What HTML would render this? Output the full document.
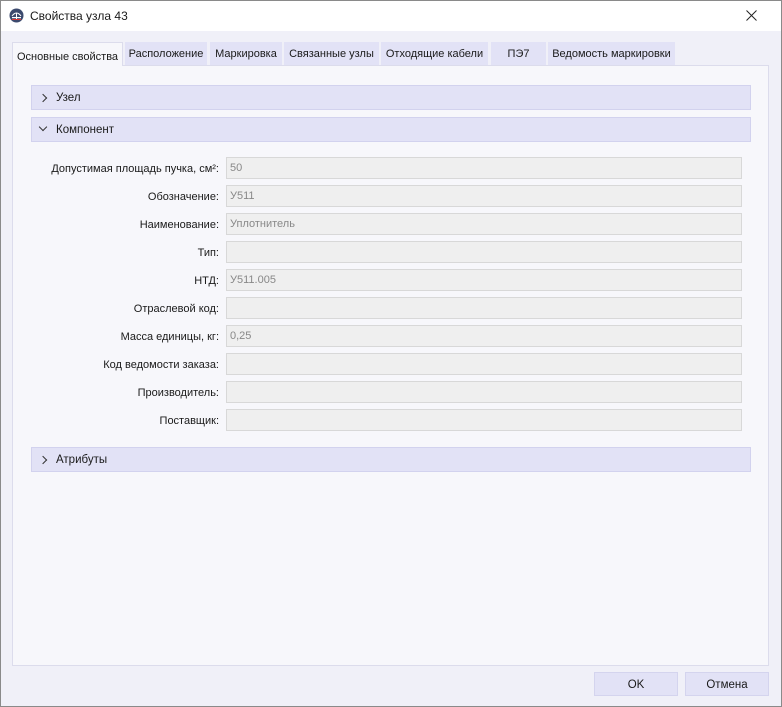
<!DOCTYPE html><html><head><meta charset="utf-8"><style>
*{box-sizing:border-box;margin:0;padding:0}
body{width:782px;height:707px;background:#f0f0f8;font-family:"Liberation Sans",sans-serif;font-size:11.5px;color:#1a1a1a;position:relative;overflow:hidden}
.bd{position:absolute;left:0;top:0;width:782px;height:707px;border:1px solid #8a8a8a;pointer-events:none}
.t{position:absolute;left:0;top:0;width:782px;height:31px;background:#fff}
.t span{position:absolute;left:30px;top:9px;font-size:12px}
.tab{position:absolute;top:42px;height:23px;background:#e2e2f6;text-align:center;line-height:24px;font-size:11px}
.tab.a{background:#f7f7fb;height:24px;line-height:28px;border:1px solid #dcdcec;border-bottom:none}
.panel{position:absolute;left:12px;top:65px;width:757px;height:601px;background:#f7f7fb;border:1px solid #dcdcec}
.h{position:absolute;left:31px;width:720px;height:25px;background:#e2e2f6;border:1px solid #d2d2ee;line-height:25px;padding-left:24px}
.h i{position:absolute;left:8px;top:9px;width:6px;height:6px;border-right:1.3px solid #333;border-bottom:1.3px solid #333;transform:rotate(-45deg)}
.h i.d{top:6px;transform:rotate(45deg)}
.l{position:absolute;right:563px;font-size:11px;text-align:right;white-space:nowrap}
.f{position:absolute;left:226px;width:516px;height:22px;background:#efefef;border:1px solid #d8d8d8;color:#888;padding-left:3px;line-height:21px;font-size:11px}
.b{position:absolute;top:672px;width:84px;height:24px;background:#e2e2f6;border:1px solid #d4d4ee;text-align:center;line-height:24px}
</style></head><body>
<div class="t"><svg style="position:absolute;left:9px;top:8px" width="15" height="15" viewBox="0 0 15 15"><circle cx="7.5" cy="7.5" r="7" fill="#3c4a6e"/><path d="M3 8 Q7.5 2 12 8" stroke="#fff" fill="none"/><rect x="3" y="9" width="9" height="1.2" fill="#fff"/><rect x="7" y="5" width="1" height="6" fill="#fff"/><rect x="3" y="11" width="9" height="1" fill="#d33"/></svg><span>Свойства узла 43</span>
<svg style="position:absolute;left:746px;top:10px" width="11" height="11" viewBox="0 0 11 11"><path d="M0.5 0.5L10.5 10.5M10.5 0.5L0.5 10.5" stroke="#222" stroke-width="1"/></svg></div>
<div class="panel"></div>
<div class="tab a" style="left:12px;width:111px">Основные свойства</div>
<div class="tab" style="left:125px;width:82px">Расположение</div>
<div class="tab" style="left:210px;width:72px">Маркировка</div>
<div class="tab" style="left:284px;width:95px">Связанные узлы</div>
<div class="tab" style="left:381px;width:107px">Отходящие кабели</div>
<div class="tab" style="left:491px;width:55px">ПЭ7</div>
<div class="tab" style="left:548px;width:127px">Ведомость маркировки</div>
<div class="h" style="top:85px"><i></i>Узел</div>
<div class="h" style="top:117px"><i class="d"></i>Компонент</div>
<div class="l" style="top:163px">Допустимая площадь пучка, см²:</div><div class="f" style="top:157px">50</div>
<div class="l" style="top:191px">Обозначение:</div><div class="f" style="top:185px">У511</div>
<div class="l" style="top:219px">Наименование:</div><div class="f" style="top:213px">Уплотнитель</div>
<div class="l" style="top:247px">Тип:</div><div class="f" style="top:241px"></div>
<div class="l" style="top:275px">НТД:</div><div class="f" style="top:269px">У511.005</div>
<div class="l" style="top:303px">Отраслевой код:</div><div class="f" style="top:297px"></div>
<div class="l" style="top:331px">Масса единицы, кг:</div><div class="f" style="top:325px">0,25</div>
<div class="l" style="top:359px">Код ведомости заказа:</div><div class="f" style="top:353px"></div>
<div class="l" style="top:387px">Производитель:</div><div class="f" style="top:381px"></div>
<div class="l" style="top:415px">Поставщик:</div><div class="f" style="top:409px"></div>
<div class="h" style="top:447px"><i></i>Атрибуты</div>
<div class="b" style="left:594px">OK</div>
<div class="b" style="left:685px">Отмена</div>
<div class="bd"></div>
</body></html>
